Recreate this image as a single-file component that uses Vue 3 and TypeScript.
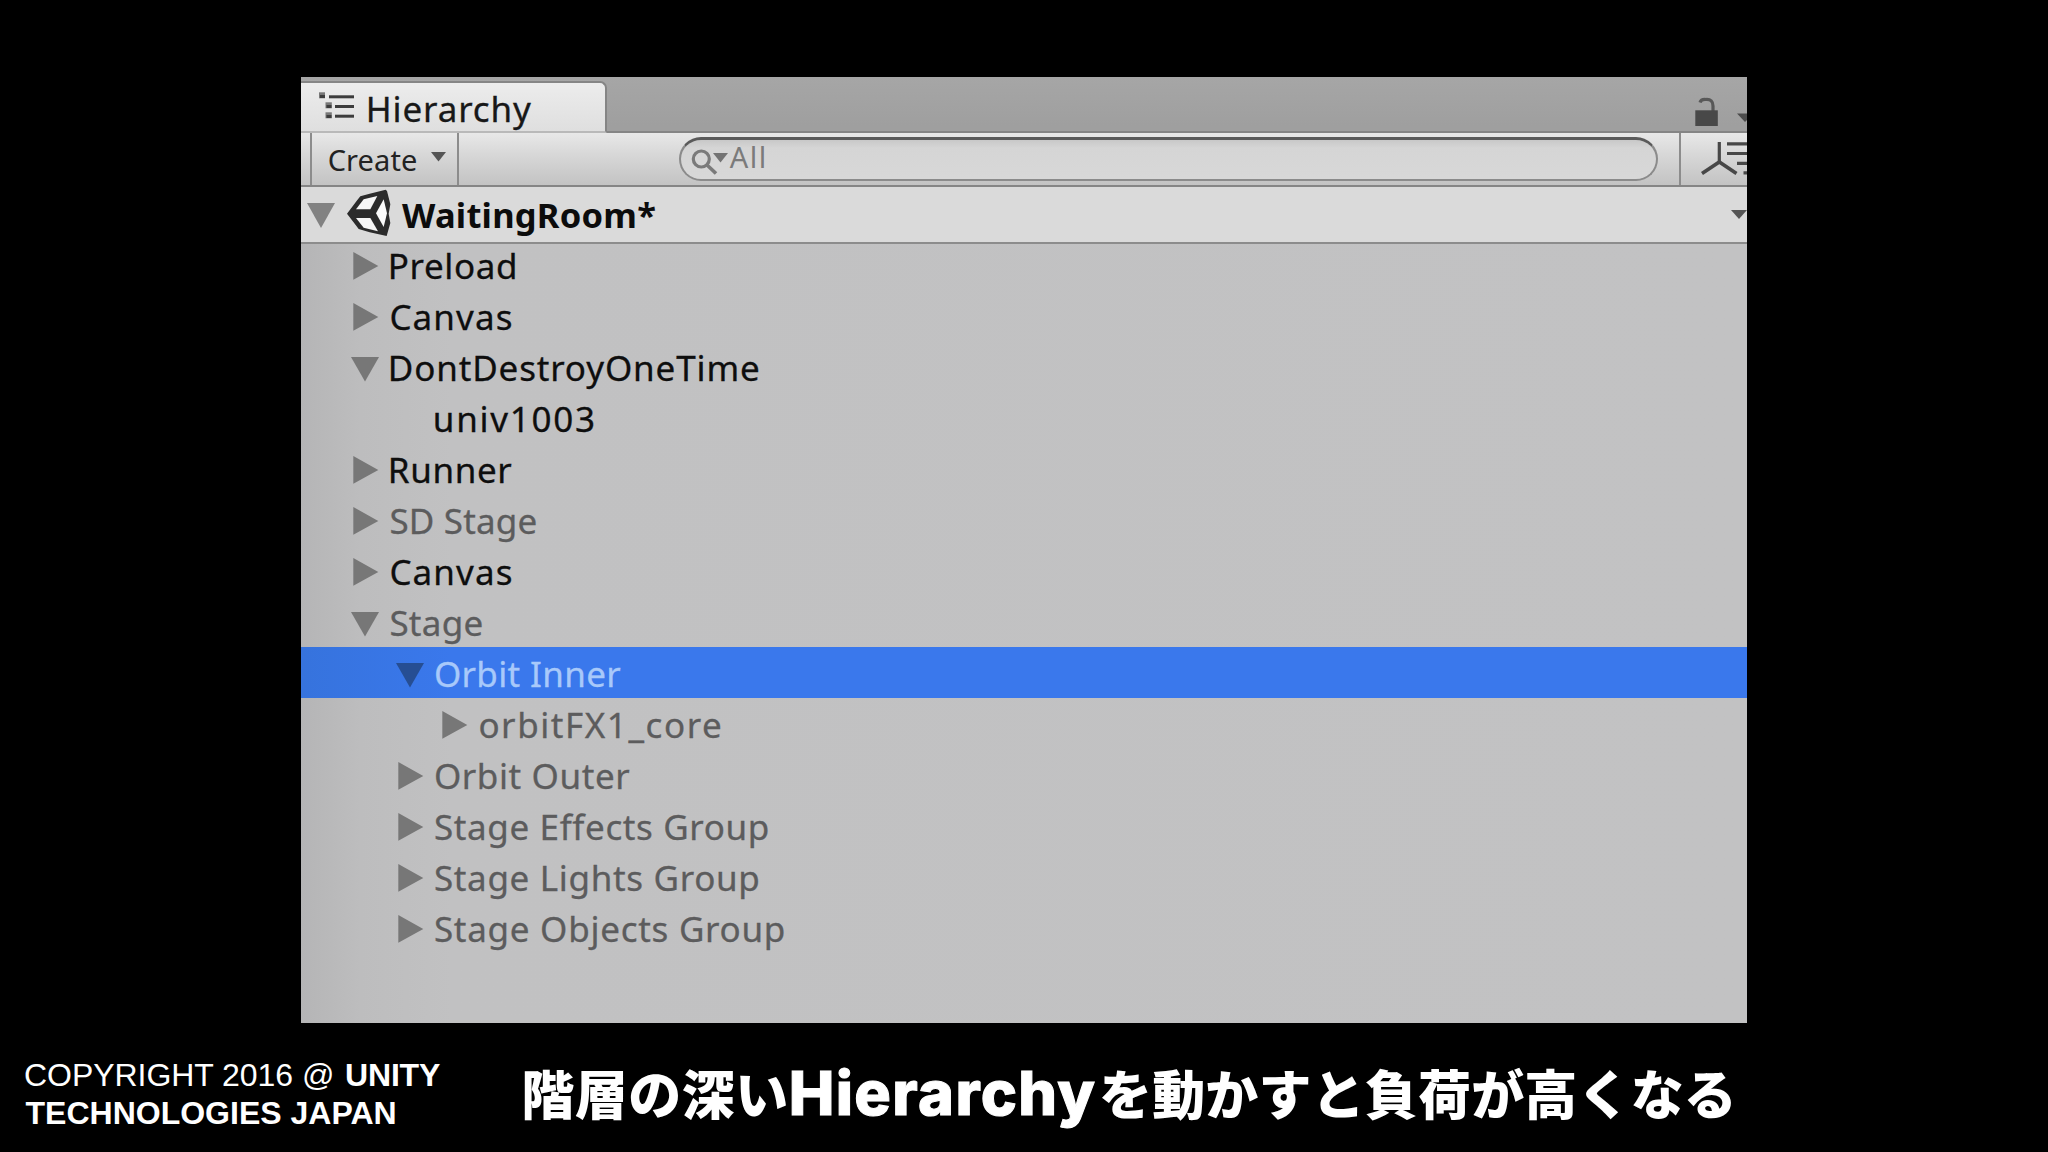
<script setup lang="ts">
interface Row {
  label: string
  level: number
  width: number
  arrow: 'open' | 'closed' | 'none'
  state: 'active' | 'muted' | 'selected'
}

const rows: Row[] = [
  { label: 'Preload', level: 0, width: 123.5, arrow: 'closed', state: 'active' },
  { label: 'Canvas', level: 0, width: 120, arrow: 'closed', state: 'active' },
  { label: 'DontDestroyOneTime', level: 0, width: 367, arrow: 'open', state: 'active' },
  { label: 'univ1003', level: 1, width: 157.5, arrow: 'none', state: 'active' },
  { label: 'Runner', level: 0, width: 120.5, arrow: 'closed', state: 'active' },
  { label: 'SD Stage', level: 0, width: 144.5, arrow: 'closed', state: 'muted' },
  { label: 'Canvas', level: 0, width: 120, arrow: 'closed', state: 'active' },
  { label: 'Stage', level: 0, width: 90.5, arrow: 'open', state: 'muted' },
  { label: 'Orbit Inner', level: 1, width: 185, arrow: 'open', state: 'selected' },
  { label: 'orbitFX1_core', level: 2, width: 240, arrow: 'closed', state: 'muted' },
  { label: 'Orbit Outer', level: 1, width: 194, arrow: 'closed', state: 'muted' },
  { label: 'Stage Effects Group', level: 1, width: 332, arrow: 'closed', state: 'muted' },
  { label: 'Stage Lights Group', level: 1, width: 322.5, arrow: 'closed', state: 'muted' },
  { label: 'Stage Objects Group', level: 1, width: 348, arrow: 'closed', state: 'muted' },
]

const UI = '"Noto Sans"'
const LEGAL = '"Liberation Sans"'
const JA = '"Noto Sans CJK JP"'
const ctx = document.createElement('canvas').getContext('2d')!

// Tracks a label so that its ink starts at the box edge and spans the given width.
// Measured at ten times the size, as glyph bounds are rounded to whole pixels.
function fit(text: string, weight: number, size: number, family: string, width: number) {
  ctx.font = `${weight} ${size * 10}px ${family}`
  const m = ctx.measureText(text)
  const left = m.actualBoundingBoxLeft / 10
  const ink = m.actualBoundingBoxRight / 10 + left
  const spacing = (width - ink) / ([...text].length - 1)
  return {
    letterSpacing: `${spacing.toFixed(3)}px`,
    marginLeft: `${left.toFixed(2)}px`,
    marginRight: `${(-left).toFixed(2)}px`,
    width: `${width}px`,
  }
}
</script>

<template>
  <main class="slide">
    <section class="panel">
      <header class="tabs">
        <div class="tab">
          <svg class="tree-icon" width="36" height="28" viewBox="0 0 36 28">
            <g fill="#777"><rect x="0" y="0.3" width="6" height="6" /><rect x="6.5" y="10.3" width="6.3" height="6" /><rect x="6.5" y="20.3" width="6.3" height="6" /></g>
            <g fill="#3c3c3c"><rect x="1" y="3" width="5" height="3" /><rect x="7.5" y="13" width="5" height="3" /><rect x="7.5" y="23" width="5" height="3" /><rect x="10" y="3.3" width="25" height="3" /><rect x="16" y="13" width="19" height="3" /><rect x="16" y="22.7" width="19" height="3" /></g>
          </svg>
          <span class="tab-name" :style="fit('Hierarchy', 400, 35, UI, 162)">Hierarchy</span>
        </div>
        <svg class="tab-tools" width="54" height="55" viewBox="1693 77 54 55">
          <path d="M1700 103.500Q1701 100 1706 100.500Q1713 100 1713 107V112" fill="none" stroke="#585858" stroke-width="3.200" />
          <rect x="1695.300" y="111.300" width="22.500" height="15.700" fill="#484848" />
          <path d="M1737 114.500H1753L1745 123Z" fill="#4c4c4c" />
        </svg>
      </header>

      <div class="toolbar">
        <div class="create">
          <span class="create-name" :style="fit('Create', 400, 29, UI, 87)">Create</span>
          <svg class="create-arrow" width="15" height="10" viewBox="0 0 15 10"><path d="M0 0H15L7.500 9.500Z" fill="#555" /></svg>
        </div>
        <div class="search">
          <svg width="40" height="40" viewBox="690 140 40 40">
            <circle cx="701.300" cy="159" r="8" fill="none" stroke="#7a7a7a" stroke-width="3.200" />
            <path d="M707 165L716 173.500" stroke="#7a7a7a" stroke-width="3.600" />
            <path d="M713 153H728L720.500 162.500Z" fill="#737373" />
          </svg>
          <span class="search-text" :style="fit('All', 400, 29, UI, 34.5)">All</span>
        </div>
        <svg class="axis" width="66" height="52" viewBox="1681 134 66 52">
          <g fill="none" stroke="#474747" stroke-width="3.200">
            <path d="M1719.300 143V164" />
            <path d="M1702 174.500L1719.300 163L1736.500 174.500" stroke-width="3.600" />
            <path d="M1727 144.800H1747M1727 154.500H1747M1737 164.300H1747M1743.500 173.800H1747" />
          </g>
        </svg>
      </div>

      <div class="scene">
        <svg class="scene-arrow" width="28" height="25" viewBox="0 0 28 25"><path d="M0 0H28L14 25Z" fill="#828282" /></svg>
        <svg class="logo" width="44" height="48" viewBox="172 356 132 144">
          <path d="M172 430L203 389L212 378L240 370L288 358L292 362L302 402L297 430L302 458L291 497L240 486L207 476L198 464Z" fill="#2b2b2b" />
          <path d="M199 417L222 387L263 377L242 417Z" fill="#f6f6f6" />
          <path d="M259 429L282 387L292 429L282 470Z" fill="#fafafa" />
          <path d="M199 443L242 443L265 483L222 472Z" fill="#f6f6f6" />
        </svg>
        <span class="scene-name" :style="fit('WaitingRoom*', 700, 34.5, UI, 253)">WaitingRoom*</span>
        <svg class="scene-menu" width="16" height="9" viewBox="0 0 16 9"><path d="M0 0H16L8 9Z" fill="#555" /></svg>
      </div>

      <ul class="list">
        <li v-for="(row, i) in rows" :key="i" class="row" :class="[row.state, `level-${row.level}`]">
          <svg class="arrow" width="29" height="51" viewBox="0 0 29 51">
            <path v-if="row.arrow === 'closed'" d="M2.300 13V40.800L27.300 26.900Z" />
            <path v-else-if="row.arrow === 'open'" d="M0 15.900H28L14 40.500Z" />
          </svg>
          <span class="name" :style="fit(row.label, 400, 35, UI, row.width)">{{ row.label }}</span>
        </li>
      </ul>
    </section>

    <footer class="footer">
      <div class="copyright">
        <div class="line">
          <span :style="fit('COPYRIGHT 2016 @', 400, 32, LEGAL, 307)">COPYRIGHT 2016 @</span>
          <b class="unity" :style="fit('UNITY', 700, 32, LEGAL, 93.5)">UNITY</b>
        </div>
        <div class="line">
          <b :style="fit('TECHNOLOGIES JAPAN', 700, 32, LEGAL, 369)">TECHNOLOGIES JAPAN</b>
        </div>
      </div>
      <p class="caption">
        <span class="ja" :style="fit('階層の深い', 900, 53, JA, 262)">階層の深い</span>
        <span class="latin" :style="fit('Hierarchy', 800, 61, 'Inter', 303)">Hierarchy</span>
        <span class="ja" :style="fit('を動かすと負荷が高くなる', 900, 53, JA, 629.5)">を動かすと負荷が高くなる</span>
      </p>
    </footer>
  </main>
</template>

<style>
body {
  margin: 0;
  background: #000;
}
</style>

<style scoped>
.slide {
  box-sizing: border-box;
  width: 2048px;
  height: 1152px;
  padding-top: 77px;
  overflow: hidden;
  background: #000;
  font-family: "Noto Sans", sans-serif;
}
svg {
  display: block;
  flex: none;
}
span,
b {
  display: block;
  flex: none;
  white-space: nowrap;
}
.panel {
  width: 1446px;
  height: 946px;
  margin-left: 301px;
  overflow: hidden;
  background: linear-gradient(90deg, #b5b5b6 0, #bdbdbe 60px, #c1c1c2 150px, #c2c2c3 100%);
}
.tabs {
  display: flex;
  align-items: flex-end;
  justify-content: space-between;
  box-sizing: border-box;
  height: 56px;
  background: linear-gradient(#a6a6a6, #9f9f9f 90%);
  border-bottom: 2px solid #858585;
}
.tab {
  display: flex;
  box-sizing: border-box;
  width: 306px;
  height: 52px;
  margin-bottom: -2px;
  padding-left: 18px;
  background: linear-gradient(#ececec, #dfdfdf);
  border-top: 2px solid #858585;
  border-right: 2px solid #858585;
  border-bottom: 2px solid #b9b9b9;
  border-radius: 0 7px 0 0;
}
.tree-icon {
  margin-top: 9px;
}
.tab-name {
  padding-left: 14px;
  font-size: 35px;
  line-height: 52px;
  color: #181818;
  -webkit-text-stroke: 0.3px;
}
.toolbar {
  display: flex;
  box-sizing: border-box;
  height: 54px;
  background: linear-gradient(#e8e8e8, #d8d8d8 40%, #c3c3c3);
  border-bottom: 2px solid #858585;
}
.create {
  display: flex;
  box-sizing: border-box;
  width: 149px;
  margin-left: 9px;
  padding-left: 17px;
  border-left: 2px solid #8c8c8c;
  border-right: 2px solid #8c8c8c;
}
.create-name {
  font-size: 29px;
  line-height: 53px;
  color: #222;
}
.create-arrow {
  margin: 19px 0 0 15px;
}
.search {
  display: flex;
  box-sizing: border-box;
  width: 981px;
  height: 44px;
  margin: 4px 0 0 220px;
  padding-left: 9px;
  background: linear-gradient(#c8c8c8, #d5d5d5 20%, #d8d8d8);
  border: 2px solid #8b8b8b;
  border-top: 3px solid #5a5a5a;
  border-radius: 22px;
}
.search-text {
  margin-top: -4px;
  font-size: 29px;
  line-height: 41px;
  color: #7b7b7b;
}
.axis {
  box-sizing: content-box;
  margin-left: 21px;
  border-left: 2px solid #8c8c8c;
}
.scene {
  display: flex;
  box-sizing: border-box;
  height: 57px;
  padding-left: 6px;
  background: #dadada;
  border-bottom: 2px solid #8c8c8c;
}
.scene-arrow {
  margin-top: 16px;
}
.logo {
  margin: 2px 0 0 12px;
}
.scene-name {
  padding-left: 11px;
  font-size: 34.5px;
  font-weight: 700;
  line-height: 56px;
  color: #0c0c0c;
}
.scene-menu {
  margin: 23px 0 0 auto;
}
.list {
  margin: -5px 0 0;
  padding: 0;
  list-style: none;
}
.row {
  display: flex;
  height: 50.97px;
  padding-left: 50px;
  color: #0e0e0e;
}
.row.level-1 {
  padding-left: 94.5px;
}
.row.level-2 {
  padding-left: 139px;
}
.row.muted {
  color: #5c5c5d;
}
.row.selected {
  color: #a8c9fa;
  background: linear-gradient(90deg, #3673dd, #3a78ec 150px);
}
.arrow {
  fill: #777;
}
.selected .arrow {
  fill: #264e93;
}
.name {
  padding-left: 11px;
  font-size: 35px;
  line-height: 53px;
  -webkit-text-stroke: 0.3px;
}
.footer {
  display: flex;
  height: 129px;
  color: #fff;
}
.copyright {
  box-sizing: border-box;
  width: 524.5px;
  padding: 33px 0 0 25.5px;
  font: 32px/38px "Liberation Sans", Arial, sans-serif;
}
.line {
  display: flex;
}
.unity {
  padding-left: 14px;
}
.caption {
  display: flex;
  align-items: baseline;
  margin: 31px 0 0;
}
.ja {
  font: 900 53px/76px "Noto Sans CJK JP", sans-serif;
}
.latin {
  padding: 0 7px 0 5px;
  font: 800 61px/76px Inter, sans-serif;
  -webkit-text-stroke: 1px;
}
</style>
